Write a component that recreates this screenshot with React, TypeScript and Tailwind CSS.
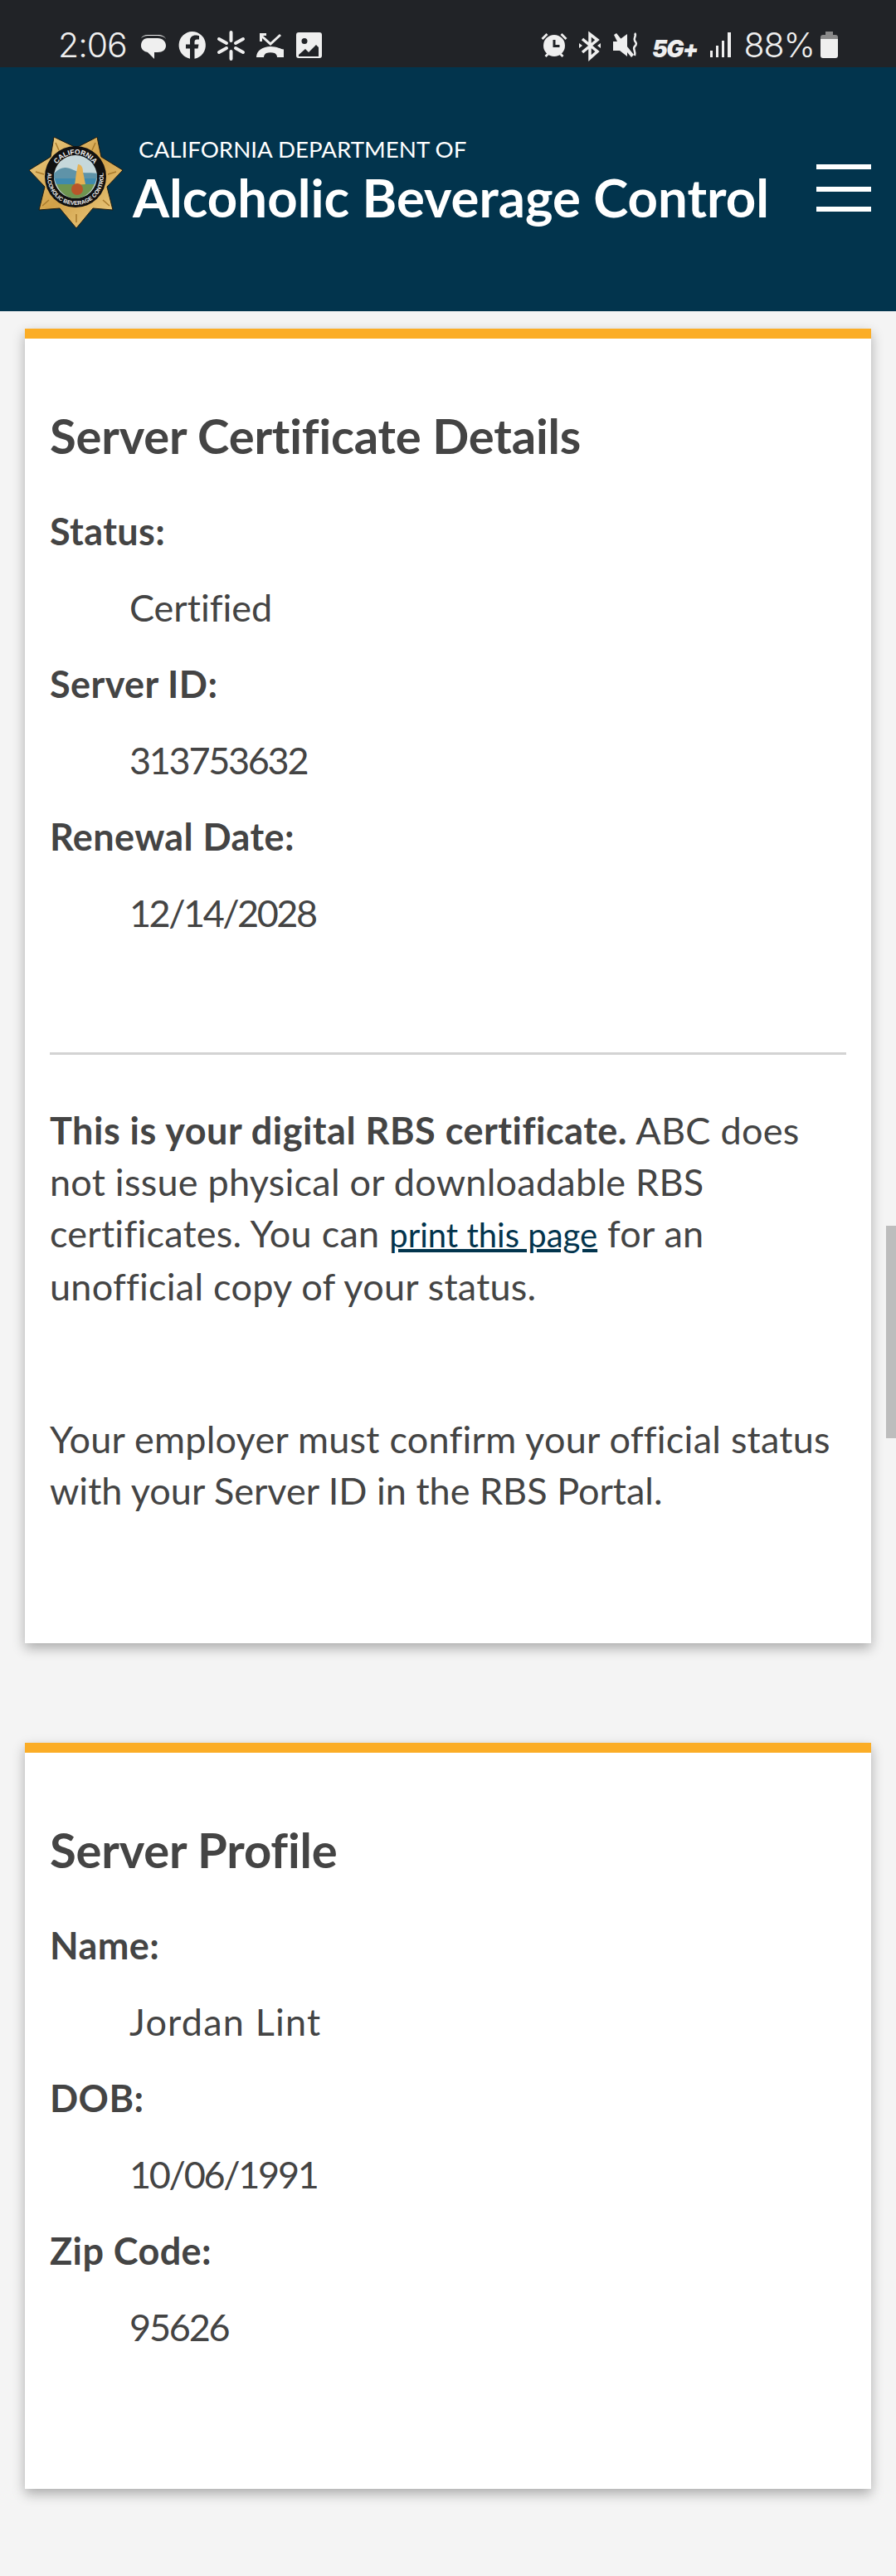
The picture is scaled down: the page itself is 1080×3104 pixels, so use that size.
const rows1 = [
  ["Status:", "Certified", "tracking-normal"],
  ["Server ID:", "313753632", "tracking-[-2.3px]"],
  ["Renewal Date:", "12/14/2028", "tracking-[-2.5px]"],
];
const rows2 = [
  ["Name:", "Jordan Lint", "tracking-[1.2px]"],
  ["DOB:", "10/06/1991", "tracking-[-2.3px]"],
  ["Zip Code:", "95626", "tracking-[-2.2px]"],
];

const StatusIcons = () => (
  <svg width="1080" height="82" viewBox="0 0 1080 82" fill="#efefef" className="absolute left-0 top-0">
    {/* chat */}
    <g transform="translate(6 1)">
      <path d="M172 41h12c5 0 9 2 10 5-2-3-6-4-10-4h-12c-3 0-6 1-8 3 1-2 4-4 8-4z" />
      <path d="M172 45h12c6 0 10 4 10 9s-4 8-10 8h-4v8l-8-8c-5-1-8-4-8-8 0-5 3-9 8-9z" />
    </g>
    {/* facebook */}
    <path transform="translate(7.500 1)" fillRule="evenodd" d="M224 37a16.500 16.500 0 0 1 3 32.700V57.500h4l1-5h-5v-3c0-2 1-3 3-3h2.500v-4.500c-1 0-2.500-.5-4-.5-4.500 0-7 2.500-7 6.500v4.500h-5v5h5v12.200A16.500 16.500 0 0 1 224 37z" />
    {/* spark */}
    <g stroke="#efefef" strokeWidth="4" strokeLinecap="round">
      <path d="M278.500 39v10M278.500 62v9M264 47l9 5M284 58l9 5M264 63l9-5M284 52l9-5" />
    </g>
    {/* missed call */}
    <g transform="translate(11 1)">
      <path d="M302 43v-4h8v3h-4l9 8 11-10 2 2-13 12-10-9v4h-3z" />
      <path d="M298 68c0-8 8-13 17-13s16 5 16 3 0 6 0 10h-8c0-2-1-4-3-5-3-1-7-1-10 0-2 1-3 3-3 5z" />
    </g>
    {/* picture */}
    <path transform="translate(12 1)" fillRule="evenodd" d="M348 38h25a3 3 0 0 1 3 3v25a3 3 0 0 1-3 3h-25a3 3 0 0 1-3-3V41a3 3 0 0 1 3-3zm7 7a3.500 3.500 0 1 0 0 7 3.500 3.500 0 0 0 0-7zm14 8l-9 9-4-4-8 7v2h24v-11z" />
    {/* alarm */}
    <g transform="translate(4.500 1)">
      <path fillRule="evenodd" d="M663.500 41a13 13 0 1 1 0 26 13 13 0 0 1 0-26zm-1.500 6v9h8v-3h-5v-6z" />
      <path d="M650 47l6-6-2-2-6 6zM677 47l-6-6 2-2 6 6zM652 66l3-3 2 2-3 3zM675 66l-3-3-2 2 3 3z" />
    </g>
    {/* bluetooth */}
    <g transform="translate(5 1)">
      <path d="M697 46l18 15-9 8V40l9 7-18 15" fill="none" stroke="#efefef" strokeWidth="3.500" />
      <path d="M693 51l4 3-4 3zM719 51l-4 3 4 3z" />
    </g>
    {/* mute */}
    <g transform="translate(5 2)">
      <path d="M735 40l3-2 21 26-3 3-5-6v5l-9-7h-8V48h5z" />
      <path d="M740 47l11-8v20z" />
      <path d="M760 38c3 3-2 6 0 9s3 4 0 7 2 6 0 11" fill="none" stroke="#efefef" strokeWidth="2.500" />
    </g>
    {/* signal */}
    <g transform="translate(10 2)">
      <rect x="846" y="59" width="3" height="8" />
      <rect x="853" y="53" width="3" height="14" />
      <rect x="860" y="47" width="3" height="20" />
      <rect x="867" y="37" width="4" height="30" />
    </g>
    {/* battery */}
    <g transform="translate(14 1)">
      <path d="M981 37h9v4h-9z" fill="#8a8a8a" />
      <path d="M978 41h15a3 3 0 0 1 3 3v2h-21v-2a3 3 0 0 1 3-3z" fill="#8a8a8a" />
      <path d="M975 46h21v20a3 3 0 0 1-3 3h-15a3 3 0 0 1-3-3z" />
    </g>
  </svg>
);

const Seal = () => (
  <svg width="114" height="112" viewBox="0 0 114 112" className="mt-[4px] shrink-0">
    <defs>
      <linearGradient id="gold" x1="0" y1="0" x2="1" y2="1">
        <stop offset="0" stopColor="#ecd08a" />
        <stop offset="0.5" stopColor="#d2a148" />
        <stop offset="1" stopColor="#efd38d" />
      </linearGradient>
      <path id="sealTop" d="M29 48A27 27 0 0 1 83 48" />
      <path id="sealBottom" d="M24.500 36A33.800 33.800 0 1 0 87.500 36" />
    </defs>
    <path d="M30 0L57 13L82 0L87 24L113 40L94 60L101 88L77 86L57 110L37 86L12 88L19 60L0 40L26 24Z" fill="url(#gold)" stroke="#1d1a10" strokeWidth="1" />
    <g fill="none" stroke="#a87a2c" strokeWidth="1.500">
      <path d="M32 7l4 9M80 7l-4 9M8 42l10 3M105 42l-10 3M16 83l8-7M97 83l-8-7M57 103v-10" />
    </g>
    <circle cx="56" cy="48" r="37" fill="#111" />
    <circle cx="56" cy="48" r="26" fill="#c6d8db" />
    <path d="M30 44c8-8 14-9 24-4s18 2 28 4v6H30z" fill="#5f93a8" />
    <path d="M31 50h50c0 3-1 5-2 7H33c-1-2-2-4-2-7z" fill="#3f8aad" />
    <path d="M33 57h46c-4 10-13 17-23 17s-19-7-23-17z" fill="#6f9550" />
    <path d="M59 33c4 0 6 4 6 9l3 15-13 1 2-15z" fill="#e6b255" />
    <circle cx="58" cy="63" r="7" fill="#b9562a" />
    <text fontFamily="'Liberation Sans', sans-serif" fontSize="8.500" fontWeight="700" fill="#f2f2f2" textAnchor="middle">
      <textPath href="#sealTop" startOffset="50%">CALIFORNIA</textPath>
    </text>
    <text fontFamily="'Liberation Sans', sans-serif" fontSize="6.800" fontWeight="700" fill="#f2f2f2" textAnchor="middle">
      <textPath href="#sealBottom" startOffset="50%">ALCOHOLIC BEVERAGE CONTROL</textPath>
    </text>
  </svg>
);

const Details = ({ rows }: { rows: string[][] }) => (
  <dl className="flex flex-col">
    {rows.map(([label, value, spacing]) => (
      <div key={label}>
        <dt className="h-[92px] font-bold leading-[62px] tracking-[0.4px]">{label}</dt>
        <dd className={`h-[92px] pl-[96px] leading-[62px] ${spacing}`}>{value}</dd>
      </div>
    ))}
  </dl>
);

const Card = ({ title, children }: { title: string; children: React.ReactNode }) => (
  <section className="border-t-[12px] border-[#fbad26] bg-white px-[30px] shadow-[0_6px_14px_rgba(0,0,0,0.3)]">
    <h2 className="mt-[82px] mb-[49px] text-[58px] font-bold leading-[70px] tracking-[-0.2px]">{title}</h2>
    {children}
  </section>
);

export default function App() {
  return (
    <div className="relative h-[3104px] w-[1080px] overflow-hidden bg-[#f4f4f4] font-['Lato',sans-serif] text-[45px] text-[#444444] [font-variant-ligatures:none]">
      <div className="relative flex h-[81px] items-end justify-between bg-[#212327] pb-[3px] pl-[70px] pr-[98px] font-['Inter',sans-serif] text-[#efefef]">
        <StatusIcons />
        <span className="text-[41px] leading-[48px] font-light tracking-[-1px]">2:06</span>
        <span className="text-[41px] leading-[48px] font-light tracking-[-1px]">88%</span>
        <span className="absolute left-[786px] top-[45px] text-[28px] leading-[28px] font-black italic tracking-[-1.5px]">5G+</span>
      </div>

      <header className="flex h-[294px] items-center bg-[#02344d] pb-[18px] pl-[35px] pr-[30px] text-white">
        <Seal />
        <div className="ml-[11px] flex-1">
          <div className="mb-[6px] ml-[7px] text-[27.7px] leading-[32px]">CALIFORNIA DEPARTMENT OF</div>
          <div className="text-[63.5px] leading-[72px] font-bold">Alcoholic Beverage Control</div>
        </div>
        <button className="mt-[16px] flex h-[58px] w-[66px] flex-col">
          <span className="h-[6px] w-full bg-white" />
          <span className="mt-[21px] h-[6px] w-full bg-white" />
          <span className="mt-[18px] h-[6px] w-full bg-white" />
        </button>
      </header>

      <main className="flex flex-col gap-[120px] px-[30px] pt-[21px]">
        <Card title="Server Certificate Details">
          <Details rows={rows1} />
          <hr className="mt-[107px] h-[3px] border-0 bg-[#d3d3d3]" />
          <p className="mt-[60px] leading-[62px] tracking-[0.25px]">
            <b className="tracking-[0.5px]">This is your digital RBS certificate.</b> ABC does not issue physical or downloadable RBS certificates. You can{" "}
            <a className="text-[40px] tracking-normal text-[#02344d] underline">print this page</a> for an unofficial copy of your status.
          </p>
          <p className="mt-[122px] pb-[153px] leading-[62px] tracking-[0.25px]">
            Your employer must confirm your official status <span className="tracking-normal">with your Server ID in the RBS Portal.</span>
          </p>
        </Card>
        <Card title="Server Profile">
          <Details rows={rows2} />
          <div className="h-[134px]" />
        </Card>
      </main>

      <div className="absolute right-0 top-[1477px] h-[256px] w-[12px] bg-[#bdbdbd]" />
    </div>
  );
}
